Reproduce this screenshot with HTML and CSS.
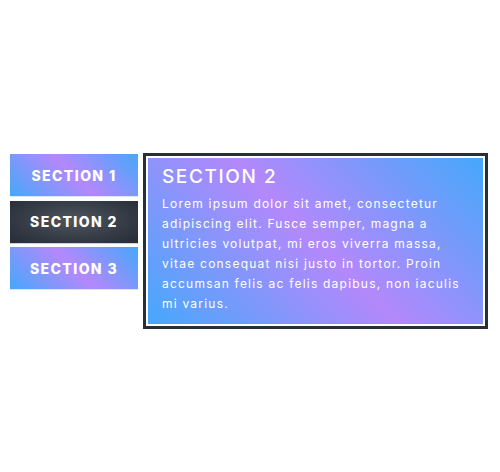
FILE: index.html
```html
<!DOCTYPE html>
<html>
<head>
<meta charset="utf-8">
<link rel="stylesheet" href="styles.css">
</head>
<body>
<div class="page">
  <div class="tabs-wrap">
    <div class="tabs">
      <div class="tab">SECTION 1</div>
      <div class="tab active">SECTION 2</div>
      <div class="tab">SECTION 3</div>
    </div>
    <div class="panel">
      <div class="panel-inner">
        <h2 class="panel-title">SECTION 2</h2>
        <p class="panel-text">Lorem ipsum dolor sit amet, consectetur adipiscing elit. Fusce semper, magna a ultricies volutpat, mi eros viverra massa, vitae consequat nisi justo in tortor. Proin accumsan felis ac felis dapibus, non iaculis mi varius.</p>
      </div>
    </div>
  </div>
</div>
</body>
</html>
```
FILE: styles.css
```css
html, body {
  margin: 0;
  padding: 0;
  background: #ffffff;
}
.page {
  width: 500px;
  height: 472px;
  box-sizing: border-box;
  padding-top: 10px;
  display: flex;
  align-items: center;
  justify-content: center;
  font-family: Inter, "DejaVu Sans", sans-serif;
}
.tabs-wrap {
  display: flex;
  align-items: flex-start;
  gap: 5px;
  margin-left: -2px;
}
.tabs {
  display: flex;
  flex-direction: column;
  gap: 3.5px;
  width: 128px;
  padding-top: 1px;
}
.tab {
  height: 43px;
  display: flex;
  align-items: center;
  justify-content: center;
  color: #ffffff;
  font-weight: 800;
  font-size: 14px;
  letter-spacing: 1.4px;
  background: linear-gradient(45deg, #45a8fb 0%, #b488fb 50%, #45a8fb 100%);
  border-bottom: 1px solid #d9e8ff;
  box-sizing: border-box;
}
.tab.active {
  background: radial-gradient(ellipse at 50% 45%, #50565f 0%, #373d46 55%, #262c35 100%);
  border-bottom: 1px solid #cfd3d8;
}
.panel {
  width: 345px;
  box-sizing: border-box;
  border: 3px solid #27303a;
  padding: 2px;
  background: #ffffff;
}
.panel-inner {
  background: linear-gradient(45deg, #45a8fb 0%, #b488fb 50%, #45a8fb 100%);
  padding: 6px 14px 10px 14px;
  color: #ffffff;
}
.panel-title {
  margin: 0;
  font-size: 19px;
  font-weight: 500;
  letter-spacing: 1.6px;
  line-height: 26px;
}
.panel-text {
  margin: 4px 0 0 0;
  font-size: 12px;
  line-height: 20px;
  letter-spacing: 1.22px;
}
```
